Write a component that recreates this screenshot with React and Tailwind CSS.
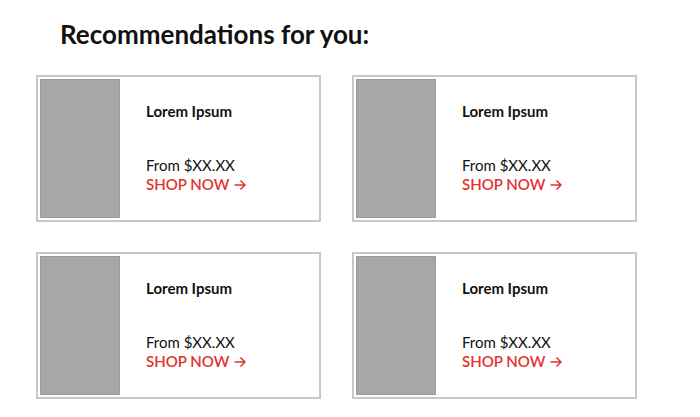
const items = [1, 2, 3, 4];

const Card = () => (
    <div className="flex h-[147px] w-[285px] border-2 border-[#c8c8cc] bg-white p-[2px]">
        <div className="h-full w-[80px] shrink-0 border border-[#999999] bg-[#a7a7a7]"></div>
        <div className="flex flex-col pl-[26px] pt-[22px]">
            <p className="text-[15px] leading-[20px] font-bold text-[#111]">Lorem Ipsum</p>
            <p className="mt-[35px] text-[15px] leading-[19px] text-[#111]">From $XX.XX</p>
            <a href="#" className="flex items-center gap-[5px] text-[15px] leading-[19px] font-semibold text-[#e3322e]">
                SHOP NOW
                <svg width="12" height="12" viewBox="0 0 12 12" fill="none" stroke="currentColor" strokeWidth="1.5">
                    <path d="M0.5 6h10.5M6.5 1.5l4.5 4.5-4.5 4.5"/>
                </svg>
            </a>
        </div>
    </div>
);

const App = () => {
    return (
        <div className="min-h-[417px] w-[700px] bg-white pl-[36px] font-['Lato',sans-serif]">
            <h1 className="pl-[24px] pt-[18px] text-[26px] leading-[32px] font-bold text-[#111]">Recommendations for you:</h1>
            <div className="mt-[25px] grid w-max grid-cols-[285px_285px] gap-x-[31px] gap-y-[30px]">
                {items.map((i) => (
                    <Card key={i}/>
                ))}
            </div>
        </div>
    );
};

export default App;
